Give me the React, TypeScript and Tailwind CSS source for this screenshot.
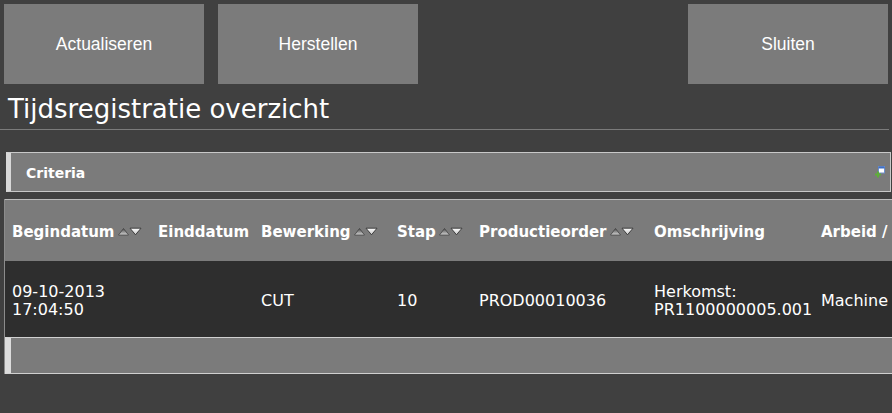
import React from "react";

const cols = [
  { label: "Begindatum", w: "w-[146px]", sort: true },
  { label: "Einddatum", w: "w-[103px]", sort: false },
  { label: "Bewerking", w: "w-[136px]", sort: true },
  { label: "Stap", w: "w-[82px]", sort: true },
  { label: "Productieorder", w: "w-[175px]", sort: true },
  { label: "Omschrijving", w: "w-[167px]", sort: false },
  { label: "Arbeid / Machine", w: "w-[160px]", sort: false },
];

// small up/down sort triangles next to the column title
function SortArrows() {
  return (
    <svg width="24" height="9" viewBox="0 0 24 9" className="ml-[3px] mt-[-3px] block shrink-0">
      <defs>
        <linearGradient id="sortUp" x1="0" y1="0" x2="0" y2="1">
          <stop offset="0" stopColor="#4a4a4a" />
          <stop offset="1" stopColor="#d4d4d4" />
        </linearGradient>
        <linearGradient id="sortDown" x1="0" y1="0" x2="0" y2="1">
          <stop offset="0" stopColor="#ffffff" />
          <stop offset="1" stopColor="#c4c4c4" />
        </linearGradient>
      </defs>
      <polygon points="0.5,8 5.5,1.5 10.5,8" fill="url(#sortUp)" stroke="#3a3a3a" strokeWidth="0.7" />
      <polygon points="12,1.2 23,1.2 17.5,7.8" fill="url(#sortDown)" stroke="#333" strokeWidth="0.9" />
    </svg>
  );
}

function Btn({ children }: { children: React.ReactNode }) {
  return (
    <button className="h-[80px] w-[200px] bg-[#7b7b7b] pt-[1px] text-[17.5px] text-white font-['Liberation_Sans',Arial,sans-serif]">
      {children}
    </button>
  );
}

export default function App() {
  return (
    <div className="h-[413px] w-[892px] overflow-hidden bg-[#404040] font-['DejaVu_Sans',Verdana,sans-serif] text-white">
      <div className="flex px-[4px] pt-[4px]">
        <Btn>Actualiseren</Btn>
        <div className="ml-[14px]">
          <Btn>Herstellen</Btn>
        </div>
        <div className="ml-auto">
          <Btn>Sluiten</Btn>
        </div>
      </div>

      <h1 className="mt-[7px] pl-[8px] text-[26px] leading-[36px]">Tijdsregistratie overzicht</h1>
      <div className="mt-[2px] mr-[3px] h-px bg-[#7b7b7b]" />

      <div className="ml-[6px] mt-[22px] flex h-[40px] w-[885px] items-center border-y border-r border-[#c8c8c8] border-l-[5px] border-l-[#d8d8d8] bg-[#7b7b7b] pt-[2px]">
        <span className="pl-[15px] text-[14px] font-bold">Criteria</span>
        <svg width="10" height="12" viewBox="0 0 10 12" className="ml-auto mr-[5px] mt-[-2px] block">
          <rect x="3.5" y="0.5" width="6" height="6.5" fill="#ffffff" stroke="#6f90cc" strokeWidth="1" />
          <rect x="3.5" y="0.5" width="6" height="2" fill="#3f6fc4" />
          <path d="M0 8.5h6M3 5.5v6" stroke="#5fae3a" strokeWidth="2" />
        </svg>
      </div>

      <div className="ml-[4px] mt-[7px] w-[1000px] border-l border-[#8c8c8c]">
        <div className="flex h-[62px] items-center border-t border-[#bcbcbc] bg-[#7b7b7b] pt-[4px]">
          {cols.map((c) => (
            <div key={c.label} className={`${c.w} flex shrink-0 items-center whitespace-nowrap pl-[7px] text-[15px] font-bold`}>
              {c.label}
              {c.sort && <SortArrows />}
            </div>
          ))}
        </div>
        <div className="flex h-[76px] items-center bg-[#2e2e2e] pt-[3px] text-[16px] leading-[18px]">
          <div className="w-[146px] shrink-0 pl-[7px]">
            09-10-2013
            <br />
            17:04:50
          </div>
          <div className="w-[103px] shrink-0 pl-[7px]" />
          <div className="w-[136px] shrink-0 pl-[7px]">CUT</div>
          <div className="w-[82px] shrink-0 pl-[7px]">10</div>
          <div className="w-[175px] shrink-0 pl-[7px]">PROD00010036</div>
          <div className="w-[167px] shrink-0 pl-[7px]">
            Herkomst:
            <br />
            PR1100000005.001
          </div>
          <div className="w-[160px] shrink-0 pl-[7px]">Machine</div>
        </div>
        <div className="h-[37px] border-y border-[#d0d0d0] border-l-[6px] border-l-[#dcdcdc] bg-[#7b7b7b]" />
      </div>
    </div>
  );
}
